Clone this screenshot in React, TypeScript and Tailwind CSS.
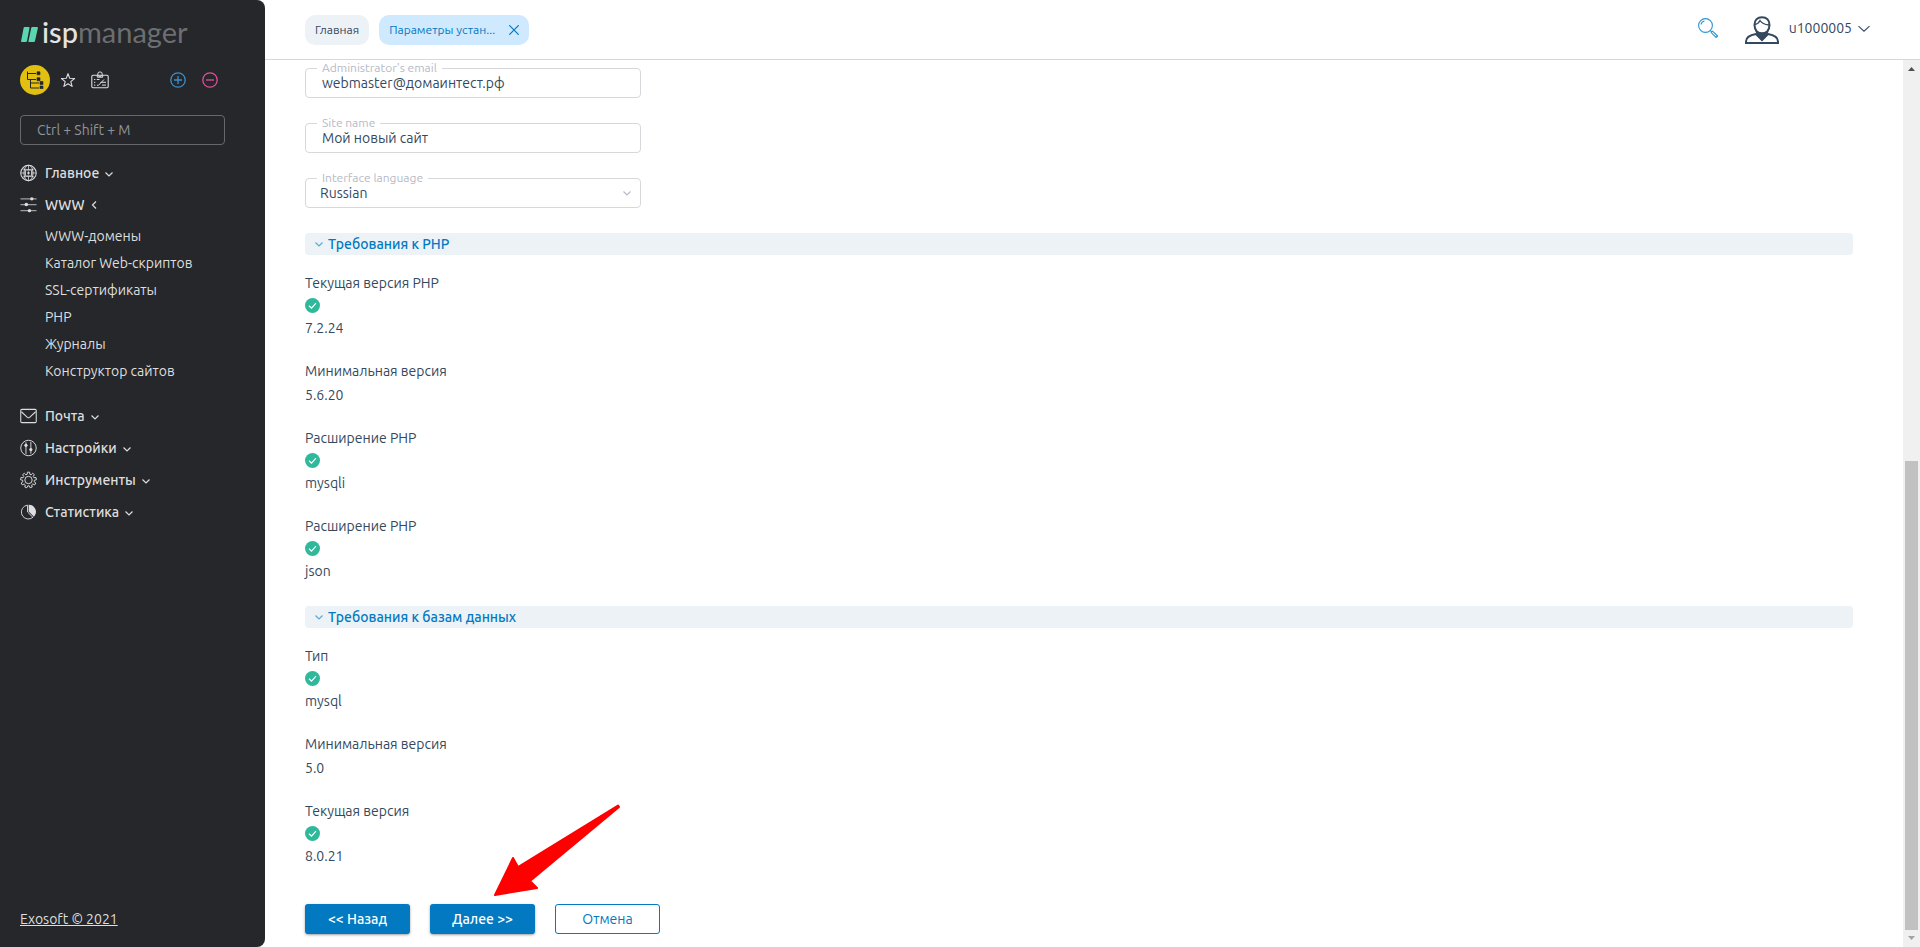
import type { ReactNode } from "react";

function Chevron({ className = "", open = false }: { className?: string; open?: boolean }) {
  return (
    <svg viewBox="0 0 8 8" className={`h-2 w-2 ${className}`} fill="none" stroke="currentColor" strokeWidth="1.2">
      <path d={open ? "M5 0.5 1.5 4 5 7.5" : "M0.5 2.5 4 6 7.5 2.5"} />
    </svg>
  );
}

function GlobeIcon() {
  return (
    <svg viewBox="0 0 18 18" className="h-[18px] w-[18px]" fill="none" stroke="currentColor" strokeWidth="1">
      <circle cx="9" cy="9" r="8.2" strokeWidth="1.1" />
      <ellipse cx="9" cy="9" rx="4.8" ry="8.2" />
      <path d="M9 .8v4.7M9 12.5v4.7M.8 9h4.7M12.5 9h4.7M2.300 4.500c4 1.600 9.400 1.600 13.400 0M2.300 13.500c4-1.600 9.400-1.600 13.400 0" strokeWidth=".8" />
      <rect x="5.700" y="5.700" width="6.600" height="6.600" rx="1" />
      <path d="M9 7.500v3M7.500 9h3" strokeWidth="1.200" />
    </svg>
  );
}

function SlidersIcon() {
  return (
    <svg viewBox="0 0 18 18" className="h-[18px] w-[18px]" fill="none" stroke="currentColor">
      <path d="M.5 2.500h17M.5 8.500h17M.5 15h17" strokeWidth="1.300" opacity=".65" />
      <circle cx="12.500" cy="2.500" r="1.800" fill="currentColor" stroke="none" />
      <circle cx="6.700" cy="8.500" r="1.900" fill="currentColor" stroke="none" />
      <circle cx="10" cy="15" r="1.800" fill="currentColor" stroke="none" />
    </svg>
  );
}

function MailIcon() {
  return (
    <svg viewBox="0 0 18 18" className="h-[18px] w-[18px]" fill="none" stroke="currentColor" strokeWidth="1.100">
      <rect x=".8" y="2" width="16.400" height="14" rx="1.200" />
      <path d="M1.500 4.500 7.800 10.400q1.200 1 2.400 0L16.500 4.500" />
    </svg>
  );
}

function TuneIcon() {
  return (
    <svg viewBox="0 0 18 18" className="h-[18px] w-[18px]" fill="none" stroke="currentColor" strokeWidth="1">
      <circle cx="9" cy="9" r="8.200" />
      <path d="M6.300 3v12.500M11.500 2.500V15" />
      <circle cx="6.300" cy="6.200" r="1.700" fill="currentColor" stroke="none" />
      <circle cx="11.500" cy="10.700" r="1.700" fill="currentColor" stroke="none" />
    </svg>
  );
}

function GearIcon() {
  const teeth = Array.from({ length: 9 }, (_, i) => {
    const p = (r: number, d: number) => {
      const a = ((i * 40 + d - 90) * Math.PI) / 180;
      return `${(9 + r * Math.cos(a)).toFixed(2)} ${(9 + r * Math.sin(a)).toFixed(2)}`;
    };
    return `${p(6.2, -13)} L${p(8.4, -8)} L${p(8.4, 8)} L${p(6.2, 13)}`;
  });
  return (
    <svg viewBox="0 0 18 18" className="h-[18px] w-[18px]" fill="none" stroke="currentColor" strokeWidth="1" strokeLinejoin="round">
      <path d={`M${teeth.join(" L")}Z`} />
      <circle cx="9" cy="9" r="3.900" />
    </svg>
  );
}

function PieIcon() {
  return (
    <svg viewBox="0 0 18 18" className="h-[18px] w-[18px]" fill="none" stroke="currentColor" strokeWidth="1">
      <path d="M8 1.800a7.300 7.300 0 1 0 6 12.400" />
      <path d="M8 1.800V9l5.500 5.500" />
      <path d="M9.200 1.200A7.600 7.600 0 0 1 14.800 14L9.200 8.500Z" fill="currentColor" stroke="none" />
    </svg>
  );
}

function MenuHeading({ icon, text, open }: { icon: ReactNode; text: string; open?: boolean }) {
  return (
    <button type="button" className="flex h-8 items-center text-left font-medium">
      <span className="mr-2 flex w-[17px]">{icon}</span>
      {text}
      <Chevron open={open} className={open ? "ml-1.5" : "mt-0.5 ml-1.5"} />
    </button>
  );
}

const wwwItems = ["WWW-домены", "Каталог Web-скриптов", "SSL-сертификаты", "PHP", "Журналы", "Конструктор сайтов"];

function Sidebar() {
  return (
    <aside className="flex w-[265px] shrink-0 flex-col rounded-r-lg bg-[#25272b] px-5 text-sm text-[#dedede]">
      <a href="#" aria-label="ispmanager" className="mt-3 flex h-10 items-center font-['Lato',sans-serif] text-[29px] leading-10">
        <svg viewBox="0 0 18 15" className="mt-1 mr-[3px] ml-px h-[15px] w-[18px]" fill="#5ad6b0">
          <path d="M3.600 0H7.700Q8.800 0 8.500 1L6 14Q5.800 15 4.800 15H.9Q-.2 15 .1 14L2.600 1Q2.800 0 3.600 0ZM11.200 0H16Q17.200 0 16.900 1L14 14Q13.800 15 12.800 15H8.300Q7.200 15 7.500 14L10.200 1Q10.400 0 11.200 0Z" />
        </svg>
        <span className="font-medium text-[#e3e3e3]">isp</span>
        <span className="text-[#6c6e71]">manager</span>
      </a>

      <div className="mt-[13px] flex h-[30px] items-center">
        <button type="button" aria-label="Дерево" className="flex h-[30px] w-[30px] items-center justify-center rounded-full bg-[#e2c012] text-[#25272b]">
          <svg viewBox="0 0 18 18" className="h-[18px] w-[18px]" fill="none" stroke="currentColor" strokeWidth="1">
            <path d="M1.500 .5v8H10M1.500 2.500H10M4.500 8.500v8.500H13M4.500 12H13" />
            <path d="M11 .8h3v3h-3zM11 6.700h3v3h-3zM14 10.500h3v3h-3zM14 15h3v2.800h-3z" fill="currentColor" strokeWidth=".6" />
          </svg>
        </button>
        <button type="button" aria-label="Избранное" className="ml-2.5">
          <svg viewBox="0 0 16 16" className="h-4 w-4" fill="none" stroke="currentColor" strokeWidth="1.100" strokeLinejoin="round">
            <path d="m8 1.600 1.700 4.600 4.900.3-3.800 3.100 1.300 4.800L8 11.700l-4.100 2.700 1.300-4.800L1.400 6.500l4.900-.3Z" />
          </svg>
        </button>
        <button type="button" aria-label="Задачи" className="ml-[15px]">
          <svg viewBox="0 0 18 18" className="h-[18px] w-[18px]" fill="none" stroke="currentColor" strokeWidth="1">
            <rect x=".8" y="4.200" width="16.400" height="12.600" rx="1.200" strokeWidth="1.100" />
            <path d="M6.300 4.200v2h5.400v-2" />
            <circle cx="9" cy="3.200" r="2.300" />
            <path d="M3 8.500h1.300M3 11.300h1.300M3 14.100h1.300M5.800 8.500h2.700M6 14.300h1.500L13 8.500M9.500 11.300H15M11 14.100h4" />
          </svg>
        </button>
        <button type="button" aria-label="Развернуть" className="ml-auto text-[#3c8ec9]">
          <svg viewBox="0 0 16 16" className="h-4 w-4" fill="none" stroke="currentColor" strokeWidth="1.300">
            <circle cx="8" cy="8" r="7.200" />
            <path d="M4 8h8M8 4v8" />
          </svg>
        </button>
        <button type="button" aria-label="Свернуть" className="mr-[27px] ml-4 text-[#e64d9a]">
          <svg viewBox="0 0 16 16" className="h-4 w-4" fill="none" stroke="currentColor" strokeWidth="1.300">
            <circle cx="8" cy="8" r="7.200" />
            <path d="M4 8h8" />
          </svg>
        </button>
      </div>

      <input
        type="text"
        aria-label="Поиск по меню"
        placeholder="Ctrl + Shift + M"
        className="mt-5 mr-5 h-[30px] rounded border border-[#66686b] bg-transparent px-4 placeholder:text-[#929497]"
      />

      <nav className="mt-3 flex flex-col items-start">
        <MenuHeading icon={<GlobeIcon />} text="Главное" />
        <MenuHeading icon={<SlidersIcon />} text="WWW" open />
        <ul className="mt-0.5 mb-[15px] pl-[25px]">
          {wwwItems.map((item) => (
            <li key={item} className="h-[27px] leading-[27px]">
              <a href="#">{item}</a>
            </li>
          ))}
        </ul>
        <MenuHeading icon={<MailIcon />} text="Почта" />
        <MenuHeading icon={<TuneIcon />} text="Настройки" />
        <MenuHeading icon={<GearIcon />} text="Инструменты" />
        <MenuHeading icon={<PieIcon />} text="Статистика" />
      </nav>

      <a href="#" className="mt-auto mb-[18px] self-start leading-5 underline">
        Exosoft © 2021
      </a>
    </aside>
  );
}

function Header() {
  return (
    <header className="flex h-[60px] shrink-0 items-center border-b border-[#d6d8dc] pr-[50px] pl-10">
      <a href="#" className="flex h-[30px] items-center rounded-[10px] bg-[#edf2f6] px-2.5 text-xs text-[#34495e]">
        Главная
      </a>
      <div className="ml-2.5 flex h-[30px] w-[150px] items-center justify-between rounded-[10px] bg-[#cfe9ff] px-2.5 text-xs text-[#0279c1]">
        <a href="#">Параметры устан...</a>
        <button type="button" aria-label="Закрыть">
          <svg viewBox="0 0 10 10" className="h-2.5 w-2.5" fill="none" stroke="currentColor" strokeWidth="1.200">
            <path d="m.3.3 9.400 9.400M9.700.3.300 9.700" />
          </svg>
        </button>
      </div>
      <button type="button" aria-label="Поиск" className="-mt-1 ml-auto text-[#2b93d6]">
        <svg viewBox="0 0 20 20" className="h-5 w-5" fill="none" stroke="currentColor" strokeWidth="1.100">
          <circle cx="7.500" cy="7.500" r="6.900" />
          <path d="M3 6.500A4.500 4.500 0 0 1 6.500 3" />
          <path d="m12.300 12.500 1.500 1.500M13.200 14.600l1.400-1.400 5 4.800-1.500 1.500Z" />
        </svg>
      </button>
      <button type="button" className="-mt-1 ml-[27px] flex items-center text-sm text-[#34495e]">
        <svg viewBox="0 0 34 28" className="mt-1 mr-2.5 h-7 w-[34px]" fill="none" stroke="currentColor" strokeWidth="2">
          <path d="M1 27v-1.500c0-4 4-6.500 10-7.500L17 24l6-6c6 1 10 3.500 10 7.500V27Z" />
          <path d="M9.500 9C9.500 4 12.500 1.200 17 1.200S24.500 4 24.500 9c0 5-3.500 9-7.500 9S9.500 14 9.500 9Z" />
          <path d="M9.800 12c1.500 3 4 4.200 7.200 4.200s5.700-1.200 7.200-4.200L22.500 19 17 25l-5.500-6Z" fill="currentColor" stroke="none" />
          <path d="M10 8.500c2.500-.5 4-2 5-4 1.500 2.500 4.500 4 9 4.500" strokeWidth="1.300" />
        </svg>
        u1000005
        <svg viewBox="0 0 12 8" className="mt-0.5 ml-1.5 h-2 w-3" fill="none" stroke="currentColor" strokeWidth="1.100">
          <path d="m.5 1.200 5.500 5 5.500-5" />
        </svg>
      </button>
    </header>
  );
}

function Field({ id, label, children }: { id: string; label: string; children: ReactNode }) {
  return (
    <div className="relative w-[336px]">
      {children}
      <label htmlFor={id} className="absolute -top-2 left-3 bg-white px-[5px] text-xs leading-4 text-[#b6bac5]">
        {label}
      </label>
    </div>
  );
}

function SectionTitle({ children }: { children: ReactNode }) {
  return (
    <h2 className="mt-[25px] rounded bg-[#edf2f6] text-sm leading-[22px] font-medium text-[#0279c1]">
      <button type="button" className="flex items-center pl-2.5">
        <Chevron className="mr-[5px] text-[#5aa9da]" />
        {children}
      </button>
    </h2>
  );
}

type Requirement = { label: string; value: string; ok?: boolean };

function Requirements({ rows }: { rows: Requirement[] }) {
  return (
    <dl className="mt-[18px] flex flex-col gap-[23px] leading-5">
      {rows.map((row, i) => (
        <div key={i}>
          <dt>{row.label}</dt>
          {row.ok ? (
            <dd className="mt-[5px]">
              <svg viewBox="0 0 15 15" role="img" aria-label="OK" className="block h-[15px] w-[15px]">
                <circle cx="7.500" cy="7.500" r="7.500" fill="#2fb99a" />
                <path d="m4 7.800 2.500 2.400 4.500-5" fill="none" stroke="#fff" strokeWidth="1.200" />
              </svg>
            </dd>
          ) : null}
          <dd className={row.ok ? "mt-[5px]" : "mt-1"}>{row.value}</dd>
        </div>
      ))}
    </dl>
  );
}

const phpRows: Requirement[] = [
  { label: "Текущая версия PHP", value: "7.2.24", ok: true },
  { label: "Минимальная версия", value: "5.6.20" },
  { label: "Расширение PHP", value: "mysqli", ok: true },
  { label: "Расширение PHP", value: "json", ok: true },
];

const dbRows: Requirement[] = [
  { label: "Тип", value: "mysql", ok: true },
  { label: "Минимальная версия", value: "5.0" },
  { label: "Текущая версия", value: "8.0.21", ok: true },
];

function Scrollbar() {
  return (
    <div aria-hidden="true" className="flex w-[17px] shrink-0 flex-col items-center bg-[#f0f0f0]">
      <svg viewBox="0 0 17 17" className="h-[17px] w-[17px] shrink-0" fill="#505050">
        <path d="M5 11h7L8.500 7Z" />
      </svg>
      <div className="flex w-[13px] grow flex-col justify-end">
        <div className="h-[55%] bg-[#c1c1c1]" />
      </div>
      <svg viewBox="0 0 17 17" className="h-[17px] w-[17px] shrink-0" fill="#a3a3a3">
        <path d="M5 6h7l-3.500 4Z" />
      </svg>
    </div>
  );
}

export default function App() {
  return (
    <div className="flex min-h-screen bg-white font-['Ubuntu','Noto_Sans',sans-serif]">
      <Sidebar />
      <div className="flex min-w-0 grow flex-col">
        <Header />
        <div className="flex grow">
          <main className="grow pt-2 pr-[50px] pb-3 pl-10 text-sm text-[#34495e]">
            <form onSubmit={(e) => e.preventDefault()}>
              <div className="flex flex-col gap-[25px]">
                <Field id="email" label="Administrator's email">
                  <input id="email" type="text" defaultValue="webmaster@домаинтест.рф" className="block h-[30px] w-full rounded border border-[#d6d8dc] px-4" />
                </Field>
                <Field id="site" label="Site name">
                  <input id="site" type="text" defaultValue="Мой новый сайт" className="block h-[30px] w-full rounded border border-[#d6d8dc] px-4" />
                </Field>
                <Field id="lang" label="Interface language">
                  <select id="lang" className="block h-[30px] w-full appearance-none rounded border border-[#d6d8dc] bg-white px-3.5">
                    <option>Russian</option>
                  </select>
                  <Chevron className="pointer-events-none absolute top-[11px] right-2.5 text-[#b6bac5]" />
                </Field>
              </div>

              <SectionTitle>Требования к PHP</SectionTitle>
              <Requirements rows={phpRows} />
              <SectionTitle>Требования к базам данных</SectionTitle>
              <Requirements rows={dbRows} />

              <div className="mt-[38px] flex gap-5">
                <button type="button" className="h-[30px] w-[105px] rounded-[3px] bg-[#0279c1] font-medium text-white shadow-sm shadow-black/30">
                  &lt;&lt; Назад
                </button>
                <div className="relative">
                  <button type="submit" className="h-[30px] w-[105px] rounded-[3px] bg-[#0279c1] font-medium text-white shadow-sm shadow-black/30">
                    Далее &gt;&gt;
                  </button>
                  <svg viewBox="0 0 128 94" className="pointer-events-none absolute bottom-full left-16 mb-1.5 h-[94px] w-32" fill="#f00" stroke="#f00" strokeWidth="2" strokeLinejoin="round">
                    <path d="M1 91 19 54 24 63 124 1.500 125 3 36 77 43 84Z" />
                  </svg>
                </div>
                <button type="button" className="h-[30px] w-[105px] rounded-[3px] border border-[#0279c1] bg-white text-[#0279c1]">
                  Отмена
                </button>
              </div>
            </form>
          </main>
          <Scrollbar />
        </div>
      </div>
    </div>
  );
}
